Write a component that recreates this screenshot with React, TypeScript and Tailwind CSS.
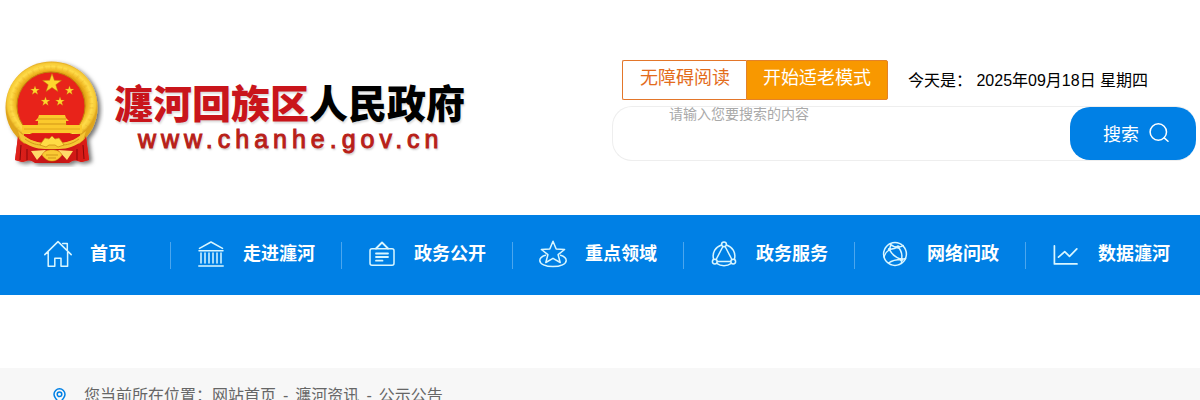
import type { ReactNode } from "react";

const stroke = {
  fill: "none",
  stroke: "currentColor",
  strokeWidth: 1.5,
  strokeLinecap: "round",
  strokeLinejoin: "round",
} as const;

function NavIcon({ children }: { children: ReactNode }) {
  return (
    <svg viewBox="0 0 28 28" className="size-7 shrink-0 text-[#d9f6ff]" aria-hidden="true" {...stroke}>
      {children}
    </svg>
  );
}

const HomeIcon = () => (
  <NavIcon>
    <path d="M.8 14.6 14 1.6l13.2 13M18.7 3.5h4.6v6.4M4.2 12v14.3h6.6v-8h6.2v8h6.6V12" />
  </NavIcon>
);

const BankIcon = () => (
  <NavIcon>
    <path d="M2.5 8.4 14 2l11.5 6.4M2 10.7h24M1.8 26h24.4" />
    <path d="M4 13v10M8 13v10M12 13v10M16 13v10M20 13v10M24 13v10" />
  </NavIcon>
);

const BoardIcon = () => (
  <NavIcon>
    <rect x="2" y="8.8" width="24" height="16.4" rx="2" />
    <path d="m8 8.5 6-6 6 6M8 13.5h12M8 17h12M8 20.7h6.5" strokeWidth="1.8" />
  </NavIcon>
);

const StarIcon = () => (
  <NavIcon>
    <path d="m14 1.3 3.2 7.7 8.4.5-6.5 5.2 2.1 7.8-7.2-4.2-7.2 4.2 2.1-7.8-6.5-5.2 8.4-.5z" />
    <path d="M6.5 15.3C2.6 16.5.8 18.3.8 20.4c0 3.5 5.6 6.2 13.2 6.2s13.2-2.7 13.2-6.2c0-2.1-1.8-3.9-5.7-5.1" />
  </NavIcon>
);

const ServiceIcon = () => (
  <NavIcon>
    <circle cx="14" cy="4.3" r="2.4" />
    <circle cx="4.8" cy="21.6" r="2.4" />
    <circle cx="23.2" cy="21.6" r="2.4" />
    <path d="M11.5 5A11.5 11.5 0 0 0 3.6 19.2M16.5 5a11.5 11.5 0 0 1 7.9 14.2M6.7 23.4a12.5 12.5 0 0 0 14.6 0M12.9 6.5 6.1 19.5M15.1 6.5l6.8 13M7.3 21.4h13.4" />
  </NavIcon>
);

const NetworkIcon = () => (
  <NavIcon>
    <circle cx="14" cy="14" r="11.4" />
    <path d="M9 4c2 2 5 3 8 3 2 0 4-.5 5.2-1.5M8.5 9.500C5.5 11.5 3.8 14 3 17M8.5 9.5c3-.5 6-1.300 8.500-2.500M8.5 9.5c2 4.500 6 8 12 10M8.500 9.500 10 4M17 7c3.500 3.600 4.500 8 3.500 12.500M20.500 19.500c-5 0-9.500 1-13 3.500M20.500 19.500l4-1M20.500 19.500v4" />
    <circle cx="8.5" cy="9.5" r="1" fill="currentColor" />
    <circle cx="17" cy="7" r="1" fill="currentColor" />
    <circle cx="20.5" cy="19.5" r="1" fill="currentColor" />
  </NavIcon>
);

const ChartIcon = () => (
  <NavIcon>
    <path d="M2.4 5.8v18.1H25M6.5 17.2l6.2-5.6 4.8 4.8 7.3-7.5" strokeWidth="1.7" />
  </NavIcon>
);

const navItems = [
  { label: "首页", Icon: HomeIcon },
  { label: "走进瀍河", Icon: BankIcon },
  { label: "政务公开", Icon: BoardIcon },
  { label: "重点领域", Icon: StarIcon },
  { label: "政务服务", Icon: ServiceIcon },
  { label: "网络问政", Icon: NetworkIcon },
  { label: "数据瀍河", Icon: ChartIcon },
];

const starPoints = "0,-10 2.4,-3.2 9.5,-3.1 3.8,1.2 5.9,8.1 0,4 -5.9,8.1 -3.8,1.2 -9.5,-3.1 -2.4,-3.2";

function Emblem() {
  return (
    <svg viewBox="0 0 100 108" className="h-[108px] w-[100px] shrink-0" aria-hidden="true">
      <defs>
        <radialGradient id="gold" cx="50%" cy="50%" r="50%">
          <stop offset="72%" stopColor="#d9960f" />
          <stop offset="79%" stopColor="#f0b823" />
          <stop offset="88%" stopColor="#ffdc4a" />
          <stop offset="96%" stopColor="#f5c935" />
          <stop offset="100%" stopColor="#dfa51f" />
        </radialGradient>
        <linearGradient id="cloth" x1="0" x2="1">
          <stop offset="0%" stopColor="#e0221c" />
          <stop offset="50%" stopColor="#c01210" />
          <stop offset="100%" stopColor="#dd1d18" />
        </linearGradient>
        <filter id="shade" x="-10%" y="-10%" width="125%" height="125%">
          <feDropShadow dx="3" dy="2" stdDeviation="2" floodColor="#000" floodOpacity=".55" />
        </filter>
      </defs>
      <g filter="url(#shade)">
        <path d="M14 78 11 101l8 2 7-2 5 3h34l5-3 7 2 8-2-3-23z" fill="url(#cloth)" />
        <path d="M47.5 2.5c26 0 46 20 46 46 0 15-7 28-18 36H20C9 76 1.5 64 1.5 48.5c0-26 20-46 46-46z" fill="url(#gold)" />
      </g>
      <circle cx="47.5" cy="48" r="40" fill="none" stroke="#cf8d10" strokeWidth="4" strokeDasharray="2 5 1 4" opacity=".15" />
      <circle cx="47" cy="47" r="34" fill="#e8231a" stroke="#c47d0c" />
      <g fill="#ffd52d" stroke="#bd7c0b" strokeWidth=".5">
        <polygon points={starPoints} transform="translate(48 24.5)" />
        <polygon points={starPoints} transform="translate(31 31.5) scale(.48)" />
        <polygon points={starPoints} transform="translate(65.5 31.5) scale(.48)" />
        <polygon points={starPoints} transform="translate(41.5 42.5) scale(.48)" />
        <polygon points={starPoints} transform="translate(56 42.5) scale(.48)" />
      </g>
      <path d="M35 56h26l1 3 3 3h-3v4h16v8H18v-8h16v-4h-3l3-3z" fill="#fbc92c" />
      <path d="M34 60h28M33 65h30" stroke="#c17f10" strokeWidth=".7" />
      <path d="M20 70h56" stroke="#dda01b" strokeWidth=".8" />
      <path d="M20 75h56v2c-6 5-14 7-20 7H40c-8 0-14-3-20-7z" fill="#dd1a15" />
      <path d="M14 72c9 8 16 11 25 12h18c9-1 16-4 25-12l-3 9c-7 6-15 9-24 9H41c-9 0-17-3-24-9z" fill="#f5c634" />
      <path d="M21 80c7 5 12 6 18 6M75 80c-7 5-12 6-18 6" stroke="#d59a18" fill="none" />
      <path d="M14 77c2 8 11 13 22 15l-8 10-5-1-5 2-7-2zM82 77c-2 8-11 13-22 15l8 10 5-1 5 2 7-2z" fill="url(#cloth)" />
      <path d="m17 86-1 15M23 90v11M79 86l1 14M73 90v11" stroke="#85090a" />
      <path d="m42 91-15 1 6 9zM54 91l15 1-6 9z" fill="#ffda6a" />
      <path d="m38 83 3-4 4 1 3-3 3 3 4-1 3 4 2 3-6 2-3-2h-6l-3 2-6-2z" fill="#ffdb45" stroke="#cb8a10" strokeWidth=".7" />
      <path d="M38 96c2-4 5-5 10-5s8 1 10 5c-3 4-6 6-10 6s-7-2-10-6z" fill="#f9c934" stroke="#d69a19" strokeWidth=".5" />
      <path d="M42 96h12M44 99h8" stroke="#d19718" />
    </svg>
  );
}

export default function App() {
  return (
    <div className="min-h-screen bg-white font-['Liberation_Sans','Noto_Sans_CJK_SC',sans-serif] text-black">
      <header className="flex items-start justify-between pr-1 pb-12 pt-[59px]">
        <a href="#home" className="flex items-start gap-2.5 pl-1">
          <Emblem />
          <span className="flex flex-col pt-[26px]">
            <span className="text-[39px] leading-10 font-black whitespace-nowrap [text-shadow:1px_2px_2px_#ddd]">
              <span className="text-[#c9151b]">瀍河回族区</span>人民政府
            </span>
            <span className="pl-6 text-[25px] leading-7 tracking-[5px] text-[#b82018] [-webkit-text-stroke:1px_#b82018] [text-shadow:1px_2px_2px_#ccc]">
              www.chanhe.gov.cn
            </span>
          </span>
        </a>

        <div className="flex w-[584px] flex-col gap-1.5 pt-px">
          <div className="flex items-center pl-2.5">
            <button type="button" className="h-10 rounded-l-xs border border-r-0 border-[#e3762a] pr-4 pb-1 pl-[17px] text-lg leading-6 text-[#e36c1c]">
              无障碍阅读
            </button>
            <button type="button" className="h-10 rounded-r-xs border border-[#e3822a] bg-[#f89800] px-4 pb-1 text-lg leading-6 text-white">
              开始适老模式
            </button>
            <p className="pt-0.5 pl-5 text-base whitespace-nowrap">今天是： 2025年09月18日 星期四</p>
          </div>
          <form className="flex rounded-[20px] border border-r-0 border-[#eeeeee]" onSubmit={(e) => e.preventDefault()}>
            <input
              type="text"
              aria-label="请输入您要搜索的内容"
              placeholder="请输入您要搜索的内容"
              className="h-3.5 min-w-0 flex-1 bg-transparent pl-14 text-sm leading-3.5 outline-none placeholder:text-[#a9a9a9]"
            />
            <button type="submit" className="flex h-[53px] w-[126px] items-center justify-center gap-2.5 rounded-[20px] bg-[#0080e5] pt-0.5 pl-1.5 text-lg text-white">
              搜索
              <svg viewBox="0 0 20 20" className="mb-1 size-5" aria-hidden="true" {...stroke}>
                <circle cx="9.3" cy="9" r="8.2" />
                <path d="m15.2 14.9 3.8 3.3" />
              </svg>
            </button>
          </form>
        </div>
      </header>

      <nav className="bg-[#0080e5] pr-[3px]">
        <ul className="grid h-20 grid-cols-7">
          {navItems.map(({ label, Icon }) => (
            <li key={label} className="group flex items-center">
              <a href="#nav" className="flex flex-1 items-center justify-center gap-[18px] pb-0.5 text-lg font-bold whitespace-nowrap text-white">
                <Icon />
                <span>{label}</span>
              </a>
              <span className="h-[27px] w-px bg-[#4ba6ee] group-last:invisible" />
            </li>
          ))}
        </ul>
      </nav>

      <main className="pt-[73px]">
        <div className="flex h-14 items-center gap-[18px] bg-[#f7f7f7] pl-[53px] text-base text-[#666666]">
          <svg viewBox="0 0 13 16" className="h-4 w-[13px] text-[#0080e5]" aria-hidden="true" {...stroke}>
            <path d="M6.5 15C3 11.5 1 9 1 6.3a5.5 5.5 0 0 1 11 0C12 9 10 11.5 6.5 15z" />
            <circle cx="6.5" cy="6.3" r="2.3" />
          </svg>
          <p className="flex">
            <span>您当前所在位置：</span>
            <a href="#home">网站首页</a>
            <span className="px-[7px]">-</span>
            <a href="#news">瀍河资讯</a>
            <span className="px-[7px]">-</span>
            <a href="#notices">公示公告</a>
          </p>
        </div>
      </main>
    </div>
  );
}
